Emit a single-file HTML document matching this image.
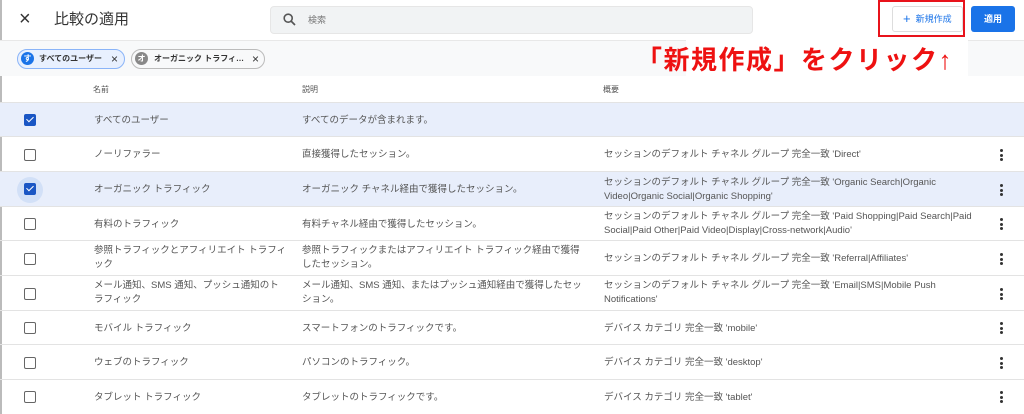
<!DOCTYPE html>
<html><head><meta charset="utf-8"><style>
*{margin:0;padding:0;box-sizing:border-box}
body{width:1024px;height:414px;overflow:hidden;background:#fff;font-family:"Liberation Sans","Noto Sans CJK JP",sans-serif;color:#3c4043;position:relative}
.a{position:absolute}
.row{position:absolute;left:0;width:1024px;border-bottom:1px solid #e3e3e3}
.row .t{position:absolute;font-size:9.5px;line-height:14px;color:#555}
.cb{position:absolute;left:24px;width:12px;height:12px;border:1.6px solid #666;border-radius:2px}
.cb.on{background:#1a56c4;border-color:#1a56c4}
.cb.on:after{content:"";position:absolute;left:3px;top:0px;width:3px;height:6px;border:solid #fff;border-width:0 1.6px 1.6px 0;transform:rotate(45deg)}
.kb{position:absolute;left:1000px;width:3px}
.kb i{display:block;width:3px;height:3px;background:#333;border-radius:50%;margin-bottom:1.5px}
.chip{position:absolute;top:49px;height:20px;border-radius:10px;font-size:8px;font-weight:bold;color:#333;line-height:18px}
</style></head><body>
<div class="a" style="left:0;top:0;width:2px;height:414px;background:#bbb"></div>
<div class="a" style="left:19px;top:8px;font-size:20px;color:#333">×</div>
<div class="a" style="left:54px;top:8px;font-size:15px;color:#333">比較の適用</div>
<div class="a" style="left:270px;top:6px;width:483px;height:28px;background:#f1f3f4;border:1px solid #e6e6e6;border-radius:4px"></div>
<svg class="a" style="left:283px;top:13px" width="13" height="13" viewBox="0 0 13 13"><circle cx="5.2" cy="5.2" r="4" fill="none" stroke="#555" stroke-width="1.6"/><path d="M8 8l4 4" stroke="#555" stroke-width="1.7"/></svg>
<div class="a" style="left:308px;top:13px;font-size:9px;color:#777">検索</div>
<div class="a" style="left:878px;top:0;width:87px;height:37px;border:2.5px solid #e8131b"></div>
<div class="a" style="left:892px;top:6px;width:71px;height:26px;border:1px solid #ddd;border-radius:3px;background:#fff;font-size:9px;color:#1a73e8;line-height:24px;padding-left:10px"><span style="font-size:13px;vertical-align:-1px">+</span>&nbsp; 新規作成</div>
<div class="a" style="left:971px;top:6px;width:44px;height:26px;background:#1a73e8;border-radius:3px;color:#fff;font-size:9px;font-weight:bold;text-align:center;line-height:26px">適用</div>
<div class="a" style="left:0;top:40px;width:1024px;height:36px;background:#f8f9fa;border-top:1px solid #e8e8e8"></div>
<div class="a" style="left:686px;top:40px;width:282px;height:36px;background:#fff"></div>
<div class="chip" style="left:17px;width:108px;border:1.5px solid #8ab4f8;background:#e8f0fe"><span style="position:absolute;left:3px;top:2px;width:13px;height:13px;border-radius:50%;background:#1a73e8;color:#fff;font-size:8px;line-height:13px;text-align:center">す</span><span style="position:absolute;left:21px;top:0">すべてのユーザー</span><span style="position:absolute;left:93px;top:0;font-size:12px;font-weight:normal">×</span></div>
<div class="chip" style="left:131px;width:134px;border:1.5px solid #bbb;background:#f8f9fa"><span style="position:absolute;left:3px;top:2px;width:13px;height:13px;border-radius:50%;background:#888;color:#fff;font-size:8px;line-height:13px;text-align:center">オ</span><span style="position:absolute;left:22px;top:0">オーガニック トラフィ…</span><span style="position:absolute;left:120px;top:0;font-size:12px;font-weight:normal">×</span></div>
<div class="a" style="left:636px;top:40px;font-size:26px;font-weight:bold;color:#ee1111;letter-spacing:1.5px;white-space:nowrap">「新規作成」をクリック↑</div>
<div class="row" style="top:76px;height:27px">
<div class="t" style="left:93px;top:7px;font-size:8px">名前</div>
<div class="t" style="left:302px;top:7px;font-size:8px">説明</div>
<div class="t" style="left:603px;top:7px;font-size:8px">概要</div>
</div>
<div class="row" style="top:103px;height:34px;background:#e8eefb">
<div class="cb on" style="top:11px"></div>
<div class="t" style="left:94px;top:11px">すべてのユーザー</div>
<div class="t" style="left:302px;top:11px">すべてのデータが含まれます。</div>
</div>
<div class="row" style="top:137px;height:35px">
<div class="cb" style="top:12px"></div>
<div class="t" style="left:94px;top:11px">ノーリファラー</div>
<div class="t" style="left:302px;top:11px">直接獲得したセッション。</div>
<div class="t" style="left:604px;top:11px">セッションのデフォルト チャネル グループ 完全一致 'Direct'</div>
<div class="kb" style="top:12px"><i></i><i></i><i></i></div>
</div>
<div class="row" style="top:172px;height:35px;background:#e8eefb">
<div class="a" style="left:17px;top:5px;width:26px;height:26px;border-radius:50%;background:#d2e0f7"></div>
<div class="cb on" style="top:11px"></div>
<div class="t" style="left:94px;top:11px">オーガニック トラフィック</div>
<div class="t" style="left:302px;top:11px">オーガニック チャネル経由で獲得したセッション。</div>
<div class="t" style="left:604px;top:4px">セッションのデフォルト チャネル グループ 完全一致 'Organic Search|Organic<br>Video|Organic Social|Organic Shopping'</div>
<div class="kb" style="top:12px"><i></i><i></i><i></i></div>
</div>
<div class="row" style="top:207px;height:34px">
<div class="cb" style="top:11px"></div>
<div class="t" style="left:94px;top:11px">有料のトラフィック</div>
<div class="t" style="left:302px;top:11px">有料チャネル経由で獲得したセッション。</div>
<div class="t" style="left:604px;top:3px">セッションのデフォルト チャネル グループ 完全一致 'Paid Shopping|Paid Search|Paid<br>Social|Paid Other|Paid Video|Display|Cross-network|Audio'</div>
<div class="kb" style="top:11px"><i></i><i></i><i></i></div>
</div>
<div class="row" style="top:241px;height:35px">
<div class="cb" style="top:12px"></div>
<div class="t" style="left:94px;top:3px">参照トラフィックとアフィリエイト トラフィ<br>ック</div>
<div class="t" style="left:302px;top:3px">参照トラフィックまたはアフィリエイト トラフィック経由で獲得<br>したセッション。</div>
<div class="t" style="left:604px;top:11px">セッションのデフォルト チャネル グループ 完全一致 'Referral|Affiliates'</div>
<div class="kb" style="top:12px"><i></i><i></i><i></i></div>
</div>
<div class="row" style="top:276px;height:35px">
<div class="cb" style="top:12px"></div>
<div class="t" style="left:94px;top:3px">メール通知、SMS 通知、プッシュ通知のト<br>ラフィック</div>
<div class="t" style="left:302px;top:3px">メール通知、SMS 通知、またはプッシュ通知経由で獲得したセッ<br>ション。</div>
<div class="t" style="left:604px;top:3px">セッションのデフォルト チャネル グループ 完全一致 'Email|SMS|Mobile Push<br>Notifications'</div>
<div class="kb" style="top:12px"><i></i><i></i><i></i></div>
</div>
<div class="row" style="top:311px;height:34px">
<div class="cb" style="top:11px"></div>
<div class="t" style="left:94px;top:11px">モバイル トラフィック</div>
<div class="t" style="left:302px;top:11px">スマートフォンのトラフィックです。</div>
<div class="t" style="left:604px;top:11px">デバイス カテゴリ 完全一致 'mobile'</div>
<div class="kb" style="top:11px"><i></i><i></i><i></i></div>
</div>
<div class="row" style="top:345px;height:35px">
<div class="cb" style="top:12px"></div>
<div class="t" style="left:94px;top:11px">ウェブのトラフィック</div>
<div class="t" style="left:302px;top:11px">パソコンのトラフィック。</div>
<div class="t" style="left:604px;top:11px">デバイス カテゴリ 完全一致 'desktop'</div>
<div class="kb" style="top:12px"><i></i><i></i><i></i></div>
</div>
<div class="row" style="top:380px;height:34px;border:none">
<div class="cb" style="top:11px"></div>
<div class="t" style="left:94px;top:11px">タブレット トラフィック</div>
<div class="t" style="left:302px;top:11px">タブレットのトラフィックです。</div>
<div class="t" style="left:604px;top:11px">デバイス カテゴリ 完全一致 'tablet'</div>
<div class="kb" style="top:11px"><i></i><i></i><i></i></div>
</div>
</body></html>
